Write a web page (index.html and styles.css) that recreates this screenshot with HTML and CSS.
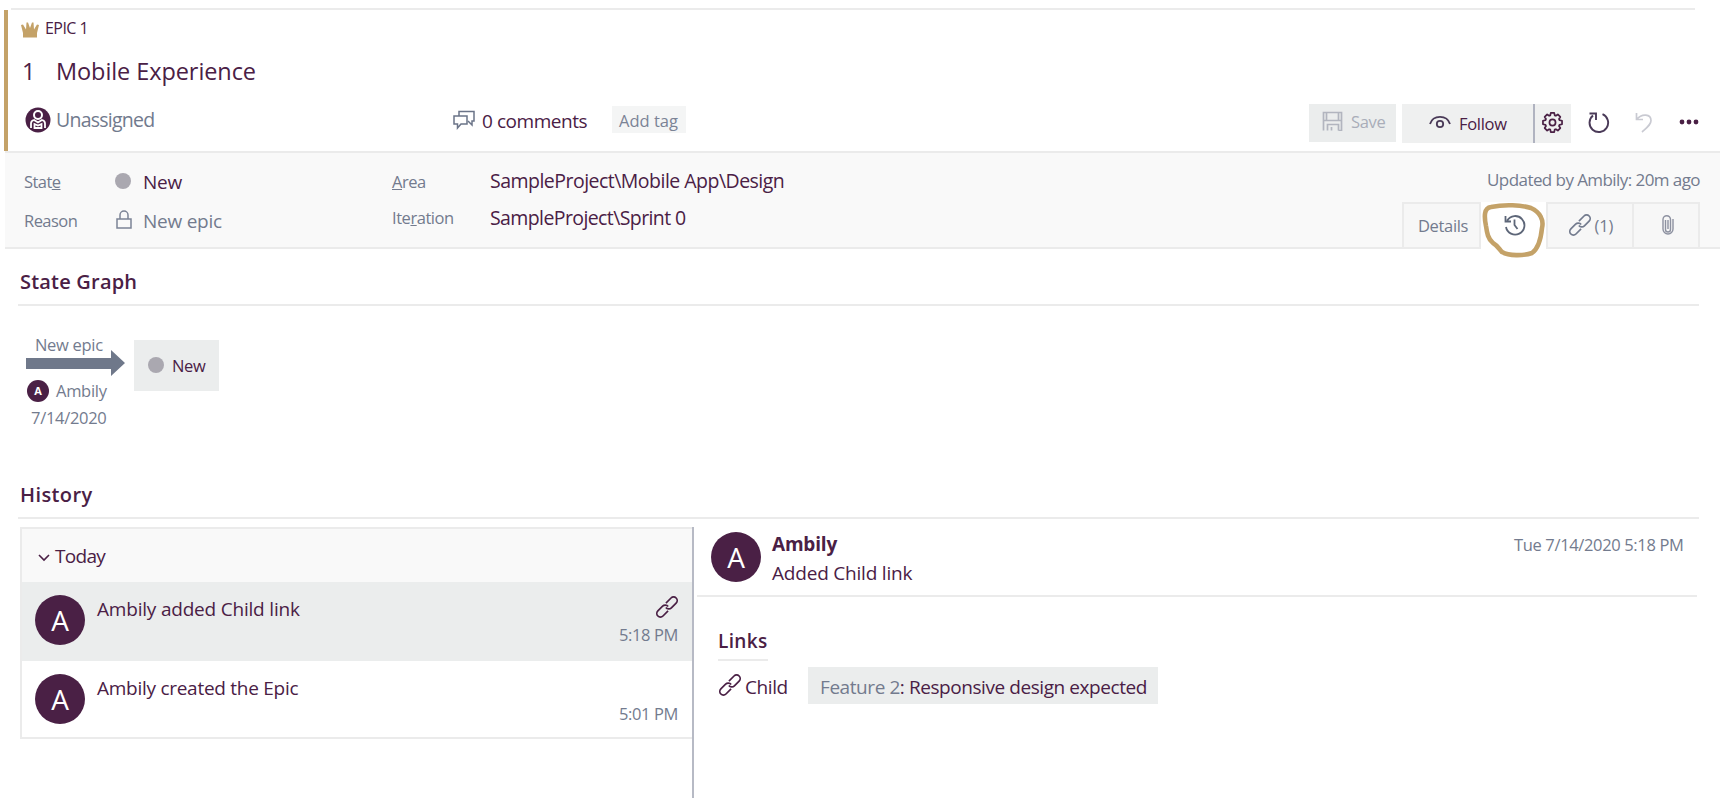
FILE: index.html
```html
<!DOCTYPE html>
<html lang="en">
<head>
<meta charset="utf-8">
<title>Epic 1 - Mobile Experience</title>
<link rel="stylesheet" href="styles.css">
</head>
<body>
<svg class="defs" width="0" height="0">
  <symbol id="link" viewBox="0 0 22 22">
    <g fill="none" stroke="currentColor" stroke-width="1.7" transform="rotate(-45 11 11)">
      <path d="M9 14.500H1.800a3.600 3.600 0 0 1 0-7.200H8.500a3.600 3.600 0 0 1 3.600 4.200"/>
      <path d="M13 7.500h7.200a3.600 3.600 0 0 1 0 7.200H13.500a3.600 3.600 0 0 1-3.600-4.200"/>
    </g>
  </symbol>
</svg>
<div class="topline"></div>
<header class="head">
  <div class="type-row">
    <svg class="crown" viewBox="0 0 18 16"><path fill="#c4a268" d="M2 15.500V11L0 3l2-.5 3 5L5.500 0.500h1.500L9 6l2-5.500h1.500L13 7.500l3-5 2 .5-2 8v4.500z"/></svg>
    <span class="t-type">EPIC 1</span>
  </div>
  <div class="title-row"><span class="t-num">1</span><span class="t-title">Mobile Experience</span></div>
  <div class="meta-row">
    <div class="assignee">
      <svg class="person" viewBox="0 0 26 26"><circle cx="13" cy="13" r="12.500" fill="#4a2045"/><circle cx="13" cy="8" r="4" fill="none" stroke="#fff" stroke-width="2"/><path d="M6 21v-4.500c0-2 1-3 3-3.500l4 2.500 4-2.500c2 .5 3 1.500 3 3.500V21M9.500 21v-4l3.500 1.500 3.500-1.500v4z" fill="none" stroke="#fff" stroke-width="1.800"/></svg>
      <span class="t-unassigned">Unassigned</span>
    </div>
    <div class="comments">
      <svg class="bubbles" viewBox="0 0 22 20"><g fill="none" stroke="#6b7488" stroke-width="1.500"><path d="M6 6V1.500h15v9.500h-2v4l-4-4"/><path d="M1 6h13v8H8l-3.500 4v-4H1z"/></g></svg>
      <span class="t-comments">0 comments</span>
    </div>
    <span class="tag">Add tag</span>
    <div class="toolbar">
      <span class="btn save"><svg viewBox="0 0 22 20"><path d="M1.500 19.500V1.500h18v18h-3M1.500 9.500h18M4.500 1.500v8M16.500 1.500v8M5.500 19.500v-6h11v6M9.500 19.500V16" fill="none" stroke="#b2b5bf" stroke-width="1.700"/></svg>Save</span>
      <span class="btn follow"><svg viewBox="0 0 22 14"><g fill="none" stroke="#4a3a58" stroke-width="1.800"><path d="M1 9C4-.5 18-.5 21 9"/><circle cx="11" cy="9" r="3.200"/></g></svg>Follow</span>
      <span class="btn gear"><svg viewBox="0 0 22 22"><g fill="none" stroke="#4a2045" stroke-width="1.800" stroke-linejoin="round"><path d="M9.200 1h3.600l.5 2.500 1.200.5 2.100-1.400 2.600 2.600L17.800 7.300l.5 1.200 2.700.7v3.600l-2.700.7-.5 1.200 1.400 2.100-2.600 2.600-2.100-1.400-1.200.5-.5 2.500H9.200l-.5-2.500-1.200-.5-2.100 1.400-2.600-2.600 1.400-2.100-.5-1.200L1 12.800V9.200l2.700-.7.5-1.200-1.400-2.100 2.600-2.600L7.500 4l1.200-.5z"/><circle cx="11" cy="11" r="3.200"/></g></svg></span>
      <svg class="refresh" viewBox="0 0 22 22"><path d="M14.500 2.200A9.300 9.300 0 1 1 5 3.500M1.500 1.500H8v6.500" fill="none" stroke="#4a3a58" stroke-width="1.900"/></svg>
      <svg class="undo" viewBox="0 0 18 21"><path d="M1.500 1v6.500H8M1.500 7.500C7 1 16 2 16 8.500c0 4-3.500 6.500-9 11.500" fill="none" stroke="#c9cad2" stroke-width="1.700"/></svg>
      <svg class="dots" viewBox="0 0 20 6"><g fill="#4a2045"><circle cx="3" cy="3" r="2.400"/><circle cx="10" cy="3" r="2.400"/><circle cx="17" cy="3" r="2.400"/></g></svg>
    </div>
  </div>
</header>
<section class="info">
  <div class="labels">
    <span class="t-label">Stat<u>e</u></span>
    <span class="t-label">Reason</span>
  </div>
  <div class="values">
    <div class="val"><i class="dot"></i><span class="t-new">New</span></div>
    <div class="val"><svg class="lock" viewBox="0 0 16 20"><path d="M1 9h14v9H1zM4 9V5a4 4 0 0 1 8 0V9" fill="none" stroke="#7c8496" stroke-width="1.500"/></svg><span class="t-reason">New epic</span></div>
  </div>
  <div class="labels2">
    <span><u>A</u>rea</span>
    <span>Ite<u>r</u>ation</span>
  </div>
  <div class="paths">
    <span class="t-path">SampleProject\Mobile App\Design</span>
    <span class="t-path2">SampleProject\Sprint 0</span>
  </div>
  <div class="right">
    <span class="t-updated">Updated by Ambily: 20m ago</span>
    <div class="tabs">
      <span class="tab details">Details</span>
      <span class="tab active">
        <svg class="clock" viewBox="0 0 22 22"><g fill="none" stroke="#5d6678" stroke-width="1.800"><path d="M3.200 6.500A9.300 9.300 0 1 1 2 13M1.500 2v5.500H7M10.500 5.500V11l3 4"/></g></svg>
        <svg class="scribble" viewBox="0 0 64 56"><path d="M4 24C2 14 2 6 9 5c14-3 30-2 40 1 9 4 13 12 11 20-1 10-3 20-10 25-9 3-23 3-30-1-3-3-4-6-9-9-5-4-6-10-7-17" fill="none" stroke="#c4a268" stroke-width="4.600" stroke-linejoin="round"/></svg>
      </span>
      <span class="tab links"><svg class="ic"><use href="#link"/></svg>(1)</span>
      <span class="tab clip"><svg viewBox="0 0 12 20"><path d="M3.500 5v9.500a2.500 2.500 0 0 0 5 0V4.500a3.500 3.500 0 0 0-7.500 0V14a5 5 0 0 0 10 0V4M6 5v9" fill="none" stroke="#8d91a0" stroke-width="1.400"/></svg></span>
    </div>
  </div>
</section>
<section class="graph-section">
  <h2 class="t-graph">State Graph</h2>
  <div class="graph">
    <div class="transition">
      <span class="t-trans">New epic</span>
      <svg class="arrow" viewBox="0 0 99 26"><path d="M0 8h85V0l14 13-14 13v-7H0z" fill="#6f788a"/></svg>
      <div class="by"><span class="avatar tiny">A</span>Ambily</div>
      <span class="t-date">7/14/2020</span>
    </div>
    <div class="state"><i class="dot"></i>New</div>
  </div>
</section>
<section class="history-section">
  <h2 class="t-history">History</h2>
  <div class="history">
    <div class="list">
      <div class="day"><svg class="chev" viewBox="0 0 12 8"><path d="M1 1l5 5 5-5" fill="none" stroke="#4a2045" stroke-width="1.600"/></svg>Today</div>
      <div class="row sel"><span class="avatar">A</span><span class="t-row">Ambily added Child link</span><div class="when"><svg class="ic"><use href="#link"/></svg><span class="t-time">5:18 PM</span></div></div>
      <div class="row"><span class="avatar">A</span><span class="t-row">Ambily created the Epic</span><div class="when"><span class="t-time">5:01 PM</span></div></div>
    </div>
    <div class="detail">
      <div class="detail-head"><span class="avatar">A</span>
        <div class="who"><span class="t-who">Ambily</span><span class="t-what">Added Child link</span></div>
        <span class="t-when">Tue 7/14/2020 5:18 PM</span></div>
      <div class="detail-body">
        <div class="links-title">Links</div>
        <div class="link-row"><svg class="ic"><use href="#link"/></svg><span class="t-child">Child</span><span class="feature"><em>Feature 2</em>: Responsive design expected</span></div>
      </div>
    </div>
  </div>
</section>
</body>
</html>
```
FILE: styles.css
```css
* { box-sizing: border-box; }
body { margin: 0; background: #fff; color: #4a2045; font-family: "Open Sans", "Noto Sans", sans-serif; font-size: 19px; line-height: 24px; overflow: hidden; }
span { white-space: nowrap; }
svg { display: block; flex: none; }
.defs { position: absolute; }
.topline { height: 2px; margin: 8px 0 0 11px; width: 1684px; background: #ebebeb; }
.head { margin-left: 4px; width: 1716px; height: 141px; border-left: 4px solid #c4a268; }

.type-row { display: flex; padding: 7px 0 0 13px; height: 36px; line-height: 22px; }
.crown { width: 18px; height: 16px; margin: 5px 6px 0 0; }
.t-type { font-size: 16px; letter-spacing: -.56px; }
.title-row { display: flex; padding: 10px 0 0 14px; height: 58px; line-height: 30px; font-size: 23.500px; }
.t-num { width: 34px; }
.t-title { letter-spacing: -.08px; }

.meta-row { display: flex; height: 39px; padding-left: 17px; }
.assignee { display: flex; width: 428px; color: #717a8d; font-size: 19.500px; padding-top: 3px; letter-spacing: -.75px; }
.t-unassigned { padding-top: 1px; }
.person { width: 26px; height: 26px; margin-right: 5px; }
.comments { display: flex; width: 159px; padding-top: 5px; letter-spacing: -.45px; }
.bubbles { width: 22px; height: 20px; margin: 1px 7px 0 0; }
.tag { width: 74px; height: 27px; margin: 2px 1px 0 0; padding-left: 7px; background: #f4f5f5; color: #7b8395; font-size: 16.500px; line-height: 29px; }
.toolbar { display: flex; margin-left: 622px; }
.btn { display: flex; background: #ebeded; height: 39px; }
.save { width: 87px; height: 38px; color: #a9adb9; font-size: 16.500px; line-height: 36px; padding-left: 13px; margin-right: 6px; letter-spacing: -.3px; }
.save svg { width: 22px; height: 20px; margin: 7px 7px 0 0; }
.follow { width: 131px; font-size: 16.500px; line-height: 39px; padding-left: 27px; background: #eff0f0; letter-spacing: -.3px; }
.follow svg { width: 22px; height: 14px; margin: 11px 8px 0 0; }
.gear { width: 38px; border-left: 2px solid #b0b3c0; padding: 8px 0 0 7px; background: #eff0f0; }
.gear svg { width: 21px; height: 21px; }
.refresh { width: 22px; height: 22px; margin: 8px 0 0 17px; }
.undo { width: 18px; height: 21px; margin: 8px 0 0 25px; }
.dots { width: 20px; height: 6px; margin: 15px 0 0 26px; }

.info { display: flex; margin-left: 5px; width: 1715px; height: 98px; background: #f9f9f9; border-top: 2px solid #ebebeb; border-bottom: 2px solid #ebebeb; color: #737b8e; }
.labels { display: flex; flex-direction: column; width: 90px; padding: 17px 0 0 19px; font-size: 16.500px; gap: 15px; letter-spacing: -.55px; }
.values { width: 297px; padding: 17px 0 0 20px; }
.val { display: flex; height: 39px; font-size: 19px; letter-spacing: -.2px; }
.dot { width: 16px; height: 16px; border-radius: 50%; background: #aaa8b0; }
.values .dot { margin: 3px 12px 0 0; }
.lock { width: 16px; height: 20px; margin: 1px 11px 0 1px; }
.t-new { color: #4a2045; }
.t-reason { letter-spacing: -.25px; }
.labels2 { display: flex; flex-direction: column; width: 98px; padding-top: 17px; font-size: 16.500px; gap: 12px; letter-spacing: -.45px; }
.paths { display: flex; flex-direction: column; gap: 13px; padding-top: 16px; color: #4a2045; font-size: 19.500px; }
.t-path { letter-spacing: -.52px; }
.t-path2 { letter-spacing: -.6px; }
.right { margin-left: auto; width: 318px; display: flex; flex-direction: column; }
.t-updated { align-self: flex-end; margin-right: 20px; padding-top: 15px; font-size: 17px; height: 49px; letter-spacing: -.57px; }
.tabs { display: flex; height: 45px; width: 298px; }
.tab { display: flex; border: 2px solid #ebebeb; border-bottom: 0; background: #f7f7f7; font-size: 16.500px; line-height: 44px; }
.details { width: 79px; padding-left: 14px; letter-spacing: -.35px; }
.active { width: 65px; height: 48px; border: 0; background: #fff; position: relative; padding: 12px 0 0 23px; }
.clock { width: 22px; height: 22px; }
.scribble { position: absolute; left: 1px; top: 0; width: 64px; height: 56px; }
.links { width: 89px; padding: 0 0 0 21px; letter-spacing: -.2px; }
.ic { width: 22px; height: 22px; }
.links .ic { margin: 10px 4px 0 0; }
.clip { width: 66px; border-left: 0; padding: 11px 0 0 28px; }
.clip svg { width: 12px; height: 20px; }

h2 { margin: 0; font-size: 20px; font-weight: 600; line-height: 28px; }
.graph-section { margin: 0 0 0 18px; width: 1681px; height: 214px; }
.t-graph { height: 57px; padding: 19px 0 0 2px; border-bottom: 2px solid #ebebeb; letter-spacing: .2px; }
.graph { display: flex; }
.transition { display: flex; flex-direction: column; width: 116px; padding: 27px 0 0 8px; color: #737b8e; font-size: 16.500px; letter-spacing: -.3px; }
.t-trans { padding-left: 9px; height: 17px; }
.arrow { width: 99px; height: 26px; }
.by { display: flex; padding: 3px 0 0 1px; height: 30px; }
.avatar { width: 50px; height: 50px; border-radius: 50%; background: #4a2045; color: #fff; font-size: 28px; line-height: 50px; text-align: center; flex: none; letter-spacing: 0; }
.tiny { width: 22px; height: 22px; font-size: 11px; line-height: 22px; font-weight: 700; margin: 1px 7px 0 0; }
.t-date { padding-left: 5px; }
.state { display: flex; width: 85px; height: 51px; margin-top: 34px; padding: 17px 0 0 14px; background: #ebeded; font-size: 16.500px; line-height: 18px; letter-spacing: -.3px; }
.state .dot { margin-right: 8px; }

.history-section { margin-left: 18px; width: 1681px; }
.t-history { height: 56px; padding: 18px 0 0 2px; border-bottom: 2px solid #ebebeb; letter-spacing: .4px; }
.history { display: flex; padding: 8px 0 0 2px; }
.list { width: 674px; height: 271px; border-right: 2px solid #b7bac5; }
.day { display: flex; height: 55px; background: #f9f9f9; border: 2px solid #ebebeb; border-right: 0; border-bottom: 0; padding: 15px 0 0 16px; letter-spacing: -.7px; }
.chev { width: 12px; height: 8px; margin: 10px 5px 0 0; }
.row { display: flex; height: 79px; padding: 13px 14px 0 13px; border-left: 2px solid #ebebeb; letter-spacing: -.2px; }
.row .avatar { margin-right: 12px; }
.t-row { padding-top: 2px; }
.row:last-child .t-row { letter-spacing: -.27px; }
.sel { background: #ebeded; }
.row:last-child { height: 78px; border-bottom: 2px solid #ebebeb; }
.when { margin-left: auto; width: 59px; display: flex; flex-direction: column; align-items: flex-start; }
.when .ic { margin: 1px 0 5px 37px; }
.t-time { color: #737b8e; font-size: 16.500px; letter-spacing: -.4px; }
.row:last-child .t-time { margin-top: 28px; }
.detail { padding-left: 3px; }
.detail-head { display: flex; width: 1000px; height: 70px; border-bottom: 2px solid #ebebeb; padding: 5px 0 0 14px; }
.who { display: flex; flex-direction: column; gap: 5px; padding: 0 0 0 11px; letter-spacing: -.2px; }
.t-who { font-weight: 700; }
.t-when { margin-left: auto; width: 183px; color: #737b8e; font-size: 16.500px; padding-top: 1px; letter-spacing: -.35px; }
.detail-body { padding: 32px 0 0 21px; }
.links-title { width: 50px; height: 32px; border-bottom: 2px solid #ebebeb; font-weight: 600; letter-spacing: .35px; }
.link-row { display: flex; padding-top: 6px; }
.link-row .ic { margin: 7px 4px 0 1px; }
.t-child { width: 63px; line-height: 40px; letter-spacing: -.4px; }
.feature { width: 350px; height: 37px; background: #ebeded; padding-left: 12px; line-height: 40px; letter-spacing: -.43px; }
em { font-style: normal; color: #737b8e; }
```
